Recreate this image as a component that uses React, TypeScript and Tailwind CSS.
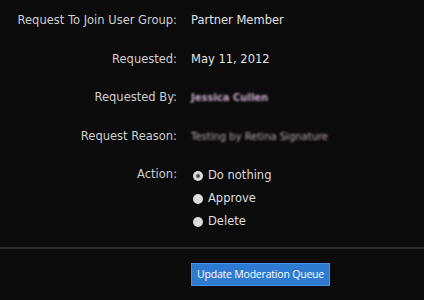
export default function App() {
  const rows: { label: string; value: React.ReactNode }[] = [
    { label: 'Request To Join User Group:', value: <span className="text-[#e2e2e2]">Partner Member</span> },
    { label: 'Requested:', value: <span className="text-[#e2e2e2]">May 11, 2012</span> },
    {
      label: 'Requested By:',
      value: <span className="text-[10px] font-bold text-[#c9a9c9] blur-[0.8px]">Jessica Cullen</span>,
    },
    {
      label: 'Request Reason:',
      value: <span className="text-[10px] text-[#b9a7b0] blur-[0.8px]">Testing by Retina Signature</span>,
    },
  ]

  return (
    <div className="h-[300px] w-[424px] overflow-hidden bg-[#0b0b0b] font-['DejaVu_Sans',sans-serif] text-[11.5px]">
      <div className="flex flex-col pt-[12px]">
        {rows.map((r) => (
          <div key={r.label} className="flex h-[38.5px] items-start">
            <div className="w-[177px] shrink-0 text-right text-[#cfcfcf]">{r.label}</div>
            <div className="pl-[14px]">{r.value}</div>
          </div>
        ))}
        <div className="flex items-start">
          <div className="w-[177px] shrink-0 text-right text-[#cfcfcf]">Action:</div>
          <div className="flex flex-col gap-[8px] pl-[16px] pt-[2px]">
            <Radio label="Do nothing" checked />
            <Radio label="Approve" />
            <Radio label="Delete" />
          </div>
        </div>
      </div>
      <div className="mt-[18px] h-[2px] bg-[#2a2a2a]" />
      <div className="pl-[191px] pt-[14px]">
        <button className="h-[23px] w-[139px] whitespace-nowrap border border-[#4a92de] bg-[#2d7ad0] px-0 font-['Open_Sans',sans-serif] text-[10.5px] tracking-[-0.2px] text-white">
          Update Moderation Queue
        </button>
      </div>
    </div>
  )
}

function Radio({ label, checked }: { label: string; checked?: boolean }) {
  return (
    <div className="flex h-[15px] items-center gap-[5px]">
      <span className="flex h-[10px] w-[10px] items-center justify-center rounded-full bg-[#dcdcdc]">
        {checked && <span className="h-[4px] w-[4px] rounded-full bg-[#555]" />}
      </span>
      <span className="text-[#dedede]">{label}</span>
    </div>
  )
}
